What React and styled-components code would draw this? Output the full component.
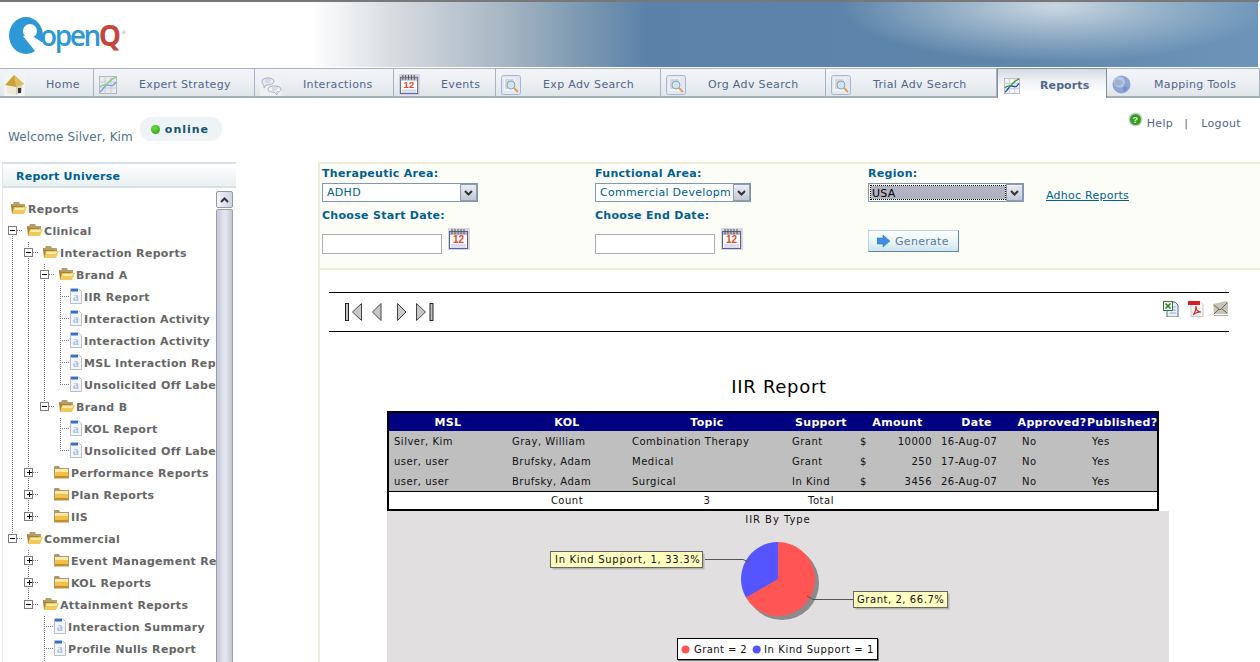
import React from "react";
import styled, { createGlobalStyle } from "styled-components";

const FONT = `"DejaVu Sans", Verdana, sans-serif`;

const Global = createGlobalStyle`
  html, body { margin: 0; padding: 0; background: #fff; height: 662px; overflow: hidden; }
  body { font-family: ${FONT}; font-size: 11px; }
  * { box-sizing: border-box; }
`;

const Page = styled.div`
  width: 1260px;
  height: 662px;
  overflow: hidden;
  display: flex;
  flex-direction: column;
`;

/* ---------- banner ---------- */
const Banner = styled.header`
  height: 68px;
  flex: none;
  display: flex;
  align-items: flex-start;
  border-top: 2px solid #77787a;
  border-bottom: 1px solid #fff;
  border-right: 2px solid #fff;
  background:
    radial-gradient(ellipse 215px 56px at 1055px 4px, rgba(208, 219, 228, 0.96) 0%, rgba(175, 195, 212, 0.72) 45%, rgba(110, 148, 184, 0) 100%),
    linear-gradient(90deg, #fff 310px, #d4d9df 400px, #a9b7c4 500px, #7796b0 590px, #5a81a8 650px, #5e86ab 1000px, #6c95b9 1258px);
`;

const LogoWrap = styled.div`
  display: flex;
  align-items: center;
  margin: 15px 0 0 9px;
  height: 37px;
`;

const LogoOpen = styled.span`
  font-family: "Open Sans", sans-serif;
  font-size: 28px;
  font-weight: 600;
  letter-spacing: -2.4px;
  color: #2d98d6;
  margin: 0 0 0 -3px;
  line-height: 37px;
`;

const LogoQ = styled.span`
  font-family: "Open Sans", sans-serif;
  font-size: 28px;
  font-weight: 700;
  letter-spacing: -1px;
  color: #c4473f;
  line-height: 37px;
`;

const LogoReg = styled.span`
  font-size: 5px;
  color: #9ab;
  margin: -8px 0 0 1px;
`;

/* ---------- tabs ---------- */
const TabBar = styled.nav`
  height: 30px;
  flex: none;
  display: flex;
`;

const Tab = styled.a`
  flex: ${(p) => (p.$w ? `0 0 ${p.$w}px` : "1 1 auto")};
  display: flex;
  align-items: center;
  padding: 4px 0 0 ${(p) => p.$pad}px;
  border-top: 1px solid ${(p) => (p.$active ? "#7f90a4" : "#a8b4c6")};
  border-bottom: ${(p) => (p.$active ? "0" : "2px solid #a4aebb")};
  border-right: 1px solid ${(p) => (p.$active ? "#7f90a4" : "#a8b4c6")};
  border-left: ${(p) => (p.$active ? "1px solid #7f90a4" : "0")};
  background: ${(p) =>
    p.$active
      ? "linear-gradient(180deg,#d3dae2 0%,#eef1f5 40%,#fff 85%)"
      : "linear-gradient(180deg,#f3f4f8 0%,#eceff3 50%,#dfe6e9 100%)"};
  color: #50668c;
  font-size: 11px;
  font-weight: ${(p) => (p.$active ? 700 : 400)};
  letter-spacing: ${(p) => (p.$active ? "0.1px" : "0.35px")};
  white-space: nowrap;
`;

const TabLabel = styled.span`
  margin-left: ${(p) => p.$gap}px;
`;

/* ---------- welcome ---------- */
const WelcomeRow = styled.div`
  height: 64px;
  flex: none;
  display: flex;
  padding: 19px 19px 0 8px;
`;

const Welcome = styled.span`
  font-size: 12px;
  letter-spacing: 0.1px;
  color: #4f7190;
  margin-top: 13px;
`;

const Online = styled.span`
  display: flex;
  align-items: center;
  gap: 5px;
  width: 82px;
  height: 24px;
  margin-left: 7px;
  padding: 0 0 0 11px;
  border-radius: 11px;
  background: #eef4f5;
  color: #17536f;
  font-size: 11px;
  font-weight: 700;
  letter-spacing: 1px;
`;

const Dot = styled.i`
  width: 9px;
  height: 9px;
  border-radius: 50%;
  background: radial-gradient(circle at 40% 35%, #6fdc3c, #1e9a12);
`;

const UserLinks = styled.div`
  margin-left: auto;
  display: flex;
  align-items: flex-start;
  color: #50668c;
  letter-spacing: 0.35px;
  margin-top: -5px;
`;

const LinkText = styled.span`
  margin: 5px 0 0 ${(p) => p.$ml || 0}px;
`;

/* ---------- columns ---------- */
const Body = styled.div`
  flex: 1;
  min-height: 0;
  display: flex;
  padding-left: 2px;
`;

const Sidebar = styled.aside`
  width: 234px;
  flex: none;
  display: flex;
  flex-direction: column;
  border-top: 2px solid #d9e0e4;
  border-left: 1px solid #dfe5e9;
  margin-right: 82px;
`;

const SideHead = styled.div`
  height: 24px;
  flex: none;
  padding: 6px 0 0 13px;
  background: linear-gradient(180deg, #fff, #e9f0f1);
  border-bottom: 2px solid #d9e0e4;
  font-weight: 700;
  color: #00608f;
  font-size: 11px;
  letter-spacing: 0.25px;
`;

const SideBody = styled.div`
  flex: 1;
  min-height: 0;
  display: flex;
  padding: 3px 4px 0 0;
`;

const Tree = styled.div`
  flex: 0 0 213px;
  width: 213px;
  overflow: hidden;
  padding: 7px 0 0 0;
`;

const dots = (x, y, w, h) => {
  const dir = w === 1 ? "to bottom" : "to right";
  return `repeating-linear-gradient(${dir},#777 0 1px,transparent 1px 2px) ${x}px ${y}px / ${w}px ${h}px no-repeat`;
};

const TreeRow = styled.div`
  height: 22px;
  display: flex;
  align-items: center;
  padding-left: ${(p) => p.$pad}px;
  background: ${(p) => p.$lines || "none"};
  white-space: nowrap;
  color: #666;
  font-weight: 700;
  font-size: 11px;
  letter-spacing: 0.32px;
`;

const Expander = styled.span`
  flex: none;
  width: 9px;
  height: 9px;
  margin-top: -2px;
  border: 1px solid #7b7b7b;
  background: #fff;
  display: flex;
  align-items: center;
  justify-content: center;
`;

const Bar = styled.i`
  display: block;
  width: 5px;
  height: 1px;
  background: #000;
`;

const BarV = styled.i`
  display: block;
  width: 1px;
  height: 5px;
  margin-left: -3px;
  background: #000;
`;

const NodeIcon = styled.span`
  flex: none;
  display: flex;
  margin-left: ${(p) => p.$ml}px;
  margin-top: -3px;
  margin-right: 1px;
`;

const Scroll = styled.div`
  width: 17px;
  flex: none;
  display: flex;
  flex-direction: column;
  gap: 1px;
`;

const ScrollBtn = styled.div`
  height: 17px;
  flex: none;
  border: 1px solid #8e9aa8;
  border-radius: 2px;
  background: linear-gradient(90deg, #f4f5fa, #cdd2e0);
  display: flex;
  align-items: center;
  justify-content: center;
`;

const ScrollThumb = styled.div`
  flex: 1;
  border: 1px solid #98a2ae;
  border-bottom: 0;
  border-radius: 2px 2px 0 0;
  background: linear-gradient(90deg, #c5c8d8 0%, #dcdee9 35%, #e6e8f0 55%, #c4c7d6 100%);
`;

/* ---------- main ---------- */
const Main = styled.main`
  flex: 1;
  min-width: 0;
  display: flex;
  flex-direction: column;
`;

const Filters = styled.section`
  height: 108px;
  flex: none;
  display: grid;
  grid-template-columns: 273px 273px 178px 1fr;
  grid-template-rows: 42px 1fr;
  padding: 2px 0 0 2px;
  border-top: 2px solid #efecd8;
  border-bottom: 2px solid #efecd8;
  border-left: 2px solid #efecd8;
  background: #fdfdf8;
`;

const Field = styled.div`
  display: flex;
  flex-direction: column;
  align-items: flex-start;
`;

const FieldLabel = styled.label`
  height: 14px;
  line-height: 16px;
  font-weight: 700;
  color: #00608f;
  font-size: 11px;
  letter-spacing: 0.3px;
`;

const SelectBox = styled.div`
  margin-top: 3px;
  width: 156px;
  height: 19px;
  display: flex;
  border: 1px solid #7f98b2;
  background: #fff;
`;

const SelectValue = styled.span`
  flex: 1;
  min-width: 0;
  overflow: hidden;
  white-space: nowrap;
  line-height: ${(p) => (p.$focus ? "15px" : "18px")};
  padding-left: ${(p) => (p.$focus ? "1px" : "4px")};
  margin: ${(p) => (p.$focus ? "2px 1px 2px 2px" : "0")};
  font-size: 11px;
  letter-spacing: 0.3px;
  color: ${(p) => (p.$focus ? "#000" : "#00608f")};
  background: ${(p) => (p.$focus ? "#b2b3c0" : "transparent")};
  outline: ${(p) => (p.$focus ? "1px dotted #000" : "none")};
`;

const SelectArrow = styled.span`
  flex: 0 0 17px;
  display: flex;
  align-items: center;
  justify-content: center;
  border: 1px solid #8e9bb2;
  background: linear-gradient(180deg, #eceef5, #c4c7d4);
`;

const DateRow = styled.div`
  display: flex;
  align-items: flex-start;
  margin-top: 6px;
`;

const DateInput = styled.div`
  width: 120px;
  height: 20px;
  margin: 6px 6px 0 0;
  background: #fff;
  border: 1px solid #a9adb6;
`;

const GenerateButton = styled.button`
  margin-top: 22px;
  width: 91px;
  height: 22px;
  padding: 0 0 0 8px;
  display: flex;
  align-items: center;
  gap: 5px;
  border: 1px solid #bcd3e2;
  border-right-color: #5f85a8;
  border-bottom-color: #5f85a8;
  background: linear-gradient(180deg, #fdfefe 0%, #eef6f8 45%, #cde5ed 100%);
  color: #5a7a9e;
  font-family: ${FONT};
  font-size: 11px;
  letter-spacing: 0.3px;
`;

const AdhocLink = styled.a`
  margin-top: 22px;
  height: 14px;
  line-height: 16px;
  color: #00608f;
  text-decoration: underline;
  font-size: 11px;
  letter-spacing: 0.25px;
`;

const Report = styled.section`
  flex: 1;
  min-height: 0;
  overflow: hidden;
  border-left: 2px solid #efecd8;
  padding-top: 22px;
`;

const Toolbar = styled.div`
  height: 40px;
  margin: 0 31px 0 9px;
  display: flex;
  align-items: center;
  padding: 0 0 0 16px;
  border-top: 1px solid #000;
  border-bottom: 1px solid #000;
`;

const PageBtns = styled.div`
  display: flex;
  align-items: center;
`;

const PageGap = styled.span`
  width: ${(p) => p.$w}px;
`;

const ExportBtns = styled.div`
  margin: -6px 1px 0 auto;
  display: flex;
  gap: 9px;
`;

const ReportBody = styled.div`
  width: 782px;
  margin-left: 67px;
`;

const ReportTitle = styled.h1`
  margin: 44px 0 13px;
  height: 22px;
  line-height: 22px;
  padding-left: 2px;
  text-align: center;
  font-size: 18px;
  font-weight: 400;
  color: #000;
  letter-spacing: 0.7px;
`;

const Table = styled.table`
  width: 772px;
  table-layout: fixed;
  border-collapse: separate;
  border-spacing: 0;
  border: 2px solid #000;
  font-size: 10px;
  letter-spacing: 0.5px;
  color: #111;
`;

const Th = styled.th`
  height: 18px;
  padding: 0 0 0 ${(p) => p.$pl || 0}px;
  background: #000080;
  color: #fff;
  font-size: 11px;
  font-weight: 700;
  letter-spacing: 0.3px;
  text-align: center;
  white-space: nowrap;
`;

const Td = styled.td`
  height: 20px;
  padding: 0 4px 0 5px;
  background: #bfbfbf;
  white-space: nowrap;
`;

const TotalTd = styled.td`
  height: 18px;
  padding: 0;
  border-top: 1px solid #000;
  background: #fff;
  text-align: center;
`;

const Money = styled.div`
  display: flex;
  justify-content: space-between;
`;

const Chart = styled.div`
  width: 782px;
  height: 160px;
  background: #e2dfe0;
`;

const ChartText = styled.text`
  font-family: ${FONT};
  font-size: 10px;
  letter-spacing: ${(p) => p.$ls}px;
  fill: #111;
`;

/* ---------- icons ---------- */
const Svg = ({ w, h, vb, children, style }) => (
  <svg width={w} height={h} viewBox={vb || `0 0 ${w} ${h}`} style={{ display: "block", flex: "none", ...style }}>
    {children}
  </svg>
);

const HomeIcon = () => (
  <Svg w={21} h={22}>
    <rect width="21" height="22" fill="#f4f4f2" />
    <path d="M3 12v7l8 2 7-3v-7l-7 2z" fill="#efe9d8" />
    <path d="M12 13l6-2v7l-6 3z" fill="#d8d2c0" />
    <path d="M1 11L10 1l10 9-8 3z" fill="#c9a23c" />
    <path d="M10 1l10 9-8 3z" fill="#e0bd5b" />
    <rect x="14" y="14" width="3" height="5" fill="#333" />
  </Svg>
);

const ChartIcon = ({ w = 18, faded }) => (
  <Svg w={w} h={w} vb="0 0 18 18">
    <rect x="0.5" y="0.5" width="17" height="17" fill={faded ? "#e9ecef" : "#f4f4fa"} stroke="#b5b5c5" />
    <path d="M0 6h18M0 12h18M6 0v18M12 0v18" stroke="#c8c8d8" strokeWidth="1" />
    <path d="M1 16C5 14 5 8 9 9s4 2 8-3" stroke={faded ? "#7fa3e0" : "#1b49c8"} strokeWidth="1.5" fill="none" />
    <path d="M1 11c3-3 5-1 7-3s4-5 9-7" stroke={faded ? "#8ed07e" : "#2ca51f"} strokeWidth="1.5" fill="none" />
  </Svg>
);

const SpeechIcon = () => (
  <Svg w={22} h={22}>
    <rect width="22" height="22" fill="#eef0f3" />
    <path d="M2 7c0-4 12-4 12 0 0 4-7 4-8 4l-2 3 0-3C3 11 2 9 2 7z" fill="#e8ecf4" stroke="#a8aec0" />
    <path d="M8 15c0-4 13-4 13 0 0 3-3 3-4 3l0 3-3-3c-3 0-6 0-6-3z" fill="#f2f4f8" stroke="#a8aec0" />
    <path d="M5 6h6M5 8h5M12 14h6M12 16h5" stroke="#c0c6d2" />
  </Svg>
);

const CalendarIcon = ({ size = 22 }) => (
  <Svg w={size} h={size} vb="0 0 22 22">
    <rect width="22" height="22" fill="#d6d6da" />
    <rect x="1.5" y="3.5" width="18" height="17" fill="#fff" stroke="#5a5f9a" />
    <rect x="2" y="4" width="17" height="3" fill="#b8b8c8" />
    <path d="M4 1v5M7 1v5M10 1v5M13 1v5M16 1v5" stroke="#555" strokeWidth="1" />
    <text x="10.5" y="15" textAnchor="middle" fontFamily="Liberation Sans" fontWeight="700" fontSize="10" fill="#e8461c">12</text>
    <path d="M3 17h15M3 19h15" stroke="#b6bce0" />
  </Svg>
);

const SearchDocIcon = () => (
  <Svg w={20} h={20}>
    <rect x="0.5" y="0.5" width="19" height="19" rx="2" fill="#e3e8f2" stroke="#a5b6d4" />
    <rect x="3" y="3" width="11" height="13" fill="#f4f5f7" />
    <path d="M4 5h9M4 7h9M4 9h3M4 11h3M4 13h3" stroke="#b3b7bd" />
    <circle cx="10" cy="10" r="4" fill="#cfe6f2" stroke="#8aa5b5" />
    <path d="M13 13l4 4" stroke="#e89a4c" strokeWidth="2" />
  </Svg>
);

const GlobeIcon = () => (
  <Svg w={19} h={19}>
    <circle cx="9.5" cy="9.5" r="9" fill="#8ea4d6" />
    <circle cx="7.5" cy="7" r="5.5" fill="#b4c6e6" />
    <path d="M3 5c3-2 5 0 7 1s1 3-1 4-5 1-6-1z" fill="#a1b0c8" />
    <path d="M11 12c2-1 4 0 5 1-1 2-3 4-5 4z" fill="#7a8fc4" />
  </Svg>
);

const HelpIcon = () => (
  <Svg w={15} h={15}>
    <circle cx="7.5" cy="7.5" r="7" fill="#c9cdd0" />
    <circle cx="7.5" cy="7.5" r="5.5" fill="#2ea31a" />
    <text x="7.5" y="11" textAnchor="middle" fontFamily="Liberation Sans" fontWeight="700" fontSize="9" fill="#fff">?</text>
  </Svg>
);

const FolderOpen = () => (
  <Svg w={16} h={14}>
    <path d="M0 3h2l1-2h5l1 2h5v3H0z" fill="#b0a070" />
    <path d="M0 3l1 10h11l0-8H2z" fill="#a88030" />
    <path d="M3 6h13l-3 7H1z" fill="#f5c85a" />
    <path d="M4 7h10l-1 2H3z" fill="#fdeeb0" />
  </Svg>
);

const FolderClosed = () => (
  <Svg w={16} h={14}>
    <path d="M0 3V1.5L1 1h4l1 2h9v10.500H0z" fill="#a79a72" />
    <path d="M1 4h13v9H1z" fill="#f3c04b" />
    <path d="M1 4h13v3H1z" fill="#fde9a2" />
    <path d="M1 11h13v2H1z" fill="#c98e1f" />
  </Svg>
);

const DocIcon = () => (
  <Svg w={13} h={16}>
    <path d="M0.5 0.5h8l3 3v12h-11z" fill="#f4f5f8" stroke="#b9bdc4" />
    <rect x="1" y="1" width="7" height="2.5" fill="#2f6fd8" />
    <text x="6" y="13" textAnchor="middle" fontFamily="Liberation Serif" fontWeight="700" fontSize="12" fill="#a9c2e6">a</text>
  </Svg>
);

const Chevron = ({ up }) => (
  <Svg w={9} h={6}>
    <path d={up ? "M1 5l3.5-3.5L8 5" : "M1 1l3.5 3.5L8 1"} stroke="#333" strokeWidth="2" fill="none" />
  </Svg>
);

const ArrowIcon = () => (
  <Svg w={13} h={12}>
    <path d="M0 3h6V0l7 6-7 6V9H0z" fill="#3f8fe0" stroke="#2a6bb8" strokeWidth="0.5" />
  </Svg>
);

const PageFirst = () => (
  <Svg w={18} h={18}>
    <rect x="0.5" y="0.5" width="3" height="17" fill="#c0c0c0" stroke="#222" />
    <path d="M16.5 0.5v17L7.5 9z" fill="#c8c8c8" stroke="#444" />
  </Svg>
);
const PagePrev = () => (
  <Svg w={10} h={18}>
    <path d="M9 0.5v17L0.5 9z" fill="#c8c8c8" stroke="#444" />
  </Svg>
);
const PageNext = () => (
  <Svg w={10} h={18}>
    <path d="M0.5 0.5v17L9 9z" fill="#c8c8c8" stroke="#444" />
  </Svg>
);
const PageLast = () => (
  <Svg w={18} h={18}>
    <rect x="14" y="0.5" width="3" height="17" fill="#c0c0c0" stroke="#222" />
    <path d="M0.5 0.5v17L9.500 9z" fill="#c8c8c8" stroke="#444" />
  </Svg>
);

const ExcelIcon = () => (
  <Svg w={16} h={16}>
    <path d="M4 1h8l3 3v12H4z" fill="#e6ecf6" stroke="#4a6a9a" />
    <path d="M7 6h6M7 9h6M7 12h6" stroke="#9db4d4" />
    <rect x="0.5" y="0.5" width="9" height="9" fill="#fff" stroke="#2c7a2c" />
    <path d="M2.5 2.5l5 5M7.5 2.5l-5 5" stroke="#1d8a1d" strokeWidth="1.6" />
  </Svg>
);

const PdfIcon = () => (
  <Svg w={16} h={16}>
    <path d="M3 0.5h9l3 3v12H3z" fill="#f8f8f8" stroke="#c8c8c8" />
    <rect x="0" y="0" width="12" height="4" fill="#d81e1e" />
    <path d="M5 14c2-2 3-6 3-9 0 4 2 6 5 6-3 0-6 1-8 3z" fill="none" stroke="#e01a1a" strokeWidth="1.1" />
  </Svg>
);

const MailIcon = () => (
  <Svg w={15} h={15}>
    <path d="M0 3l13-3 2 1v12H1z" fill="#c8c4b8" />
    <path d="M1 4l6 5 7-7M1 13l5-5M14 12l-5-4" stroke="#6b675c" fill="none" />
    <path d="M1 14h14v1H1z" fill="#aaa" />
  </Svg>
);

const LogoMark = () => (
  <Svg w={34} h={37}>
    <ellipse cx="17" cy="18.500" rx="17" ry="18.500" fill="#2d98d6" />
    <circle cx="21" cy="14" r="7" fill="#fff" />
    <path d="M14 19l12 15h8V26l-12-8z" fill="#fff" />
  </Svg>
);

/* ---------- data ---------- */
const TABS = [
  { label: "Home", w: 94, pad: 4, gap: 21, icon: <HomeIcon /> },
  { label: "Expert Strategy", w: 161, pad: 5, gap: 22, icon: <ChartIcon faded /> },
  { label: "Interactions", w: 139, pad: 5, gap: 21, icon: <SpeechIcon /> },
  { label: "Events", w: 102, pad: 5, gap: 21, icon: <CalendarIcon size={21} /> },
  { label: "Exp Adv Search", w: 165, pad: 5, gap: 22, icon: <SearchDocIcon /> },
  { label: "Org Adv Search", w: 165, pad: 5, gap: 22, icon: <SearchDocIcon /> },
  { label: "Trial Adv Search", w: 171, pad: 5, gap: 22, icon: <SearchDocIcon /> },
  { label: "Reports", w: 110, pad: 6, gap: 20, active: true, icon: <ChartIcon w={16} /> },
  { label: "Mapping Tools", pad: 5, gap: 23, icon: <GlobeIcon /> },
];

const OFF = 3; // tree x offset: the sidebar's content box begins at page x 3
const V = (x, y = 0, h = 22) => dots(x - OFF, y, 1, h);
const H = (x, w) => dots(x - OFF, 10, w, 1);

const A = 12, B = 28, C = 44, D = 60;
const full = (...xs) => xs.map((x) => V(x));

const TREE = [
  { label: "Reports", icon: "open", iconX: 11, lines: [] },
  { label: "Clinical", icon: "open", exp: "minus", expX: 8, iconX: 27, lines: [V(A, 8, 14), H(17, 5)] },
  { label: "Interaction Reports", icon: "open", exp: "minus", expX: 24, iconX: 43, lines: [...full(A, B), H(33, 5)] },
  { label: "Brand A", icon: "open", exp: "minus", expX: 40, iconX: 59, lines: [...full(A, B, C), H(49, 5)] },
  { label: "IIR Report", icon: "doc", iconX: 70, lines: [...full(A, B, C, D), H(D, 9)] },
  { label: "Interaction Activity", icon: "doc", iconX: 70, lines: [...full(A, B, C, D), H(D, 9)] },
  { label: "Interaction Activity", icon: "doc", iconX: 70, lines: [...full(A, B, C, D), H(D, 9)] },
  { label: "MSL Interaction Rep", icon: "doc", iconX: 70, lines: [...full(A, B, C, D), H(D, 9)] },
  { label: "Unsolicited Off Labe", icon: "doc", iconX: 70, lines: [...full(A, B, C), V(D, 0, 11), H(D, 9)] },
  { label: "Brand B", icon: "open", exp: "minus", expX: 40, iconX: 59, lines: [...full(A, B), V(C, 0, 10), H(49, 5)] },
  { label: "KOL Report", icon: "doc", iconX: 70, lines: [...full(A, B, D), H(D, 9)] },
  { label: "Unsolicited Off Labe", icon: "doc", iconX: 70, lines: [...full(A, B), V(D, 0, 11), H(D, 9)] },
  { label: "Performance Reports", icon: "closed", exp: "plus", expX: 24, iconX: 54, lines: [...full(A, B), H(33, 5)] },
  { label: "Plan Reports", icon: "closed", exp: "plus", expX: 24, iconX: 54, lines: [...full(A, B), H(33, 5)] },
  { label: "IIS", icon: "closed", exp: "plus", expX: 24, iconX: 54, lines: [V(A), V(B, 0, 10), H(33, 5)] },
  { label: "Commercial", icon: "open", exp: "minus", expX: 8, iconX: 27, lines: [V(A, 0, 10), H(17, 5)] },
  { label: "Event Management Re", icon: "closed", exp: "plus", expX: 24, iconX: 54, lines: [V(B), H(33, 5)] },
  { label: "KOL Reports", icon: "closed", exp: "plus", expX: 24, iconX: 54, lines: [V(B), H(33, 5)] },
  { label: "Attainment Reports", icon: "open", exp: "minus", expX: 24, iconX: 43, lines: [V(B, 0, 10), H(33, 5)] },
  { label: "Interaction Summary", icon: "doc", iconX: 54, lines: [V(C), H(C, 9)] },
  { label: "Profile Nulls Report", icon: "doc", iconX: 54, lines: [V(C), H(C, 9)] },
  { label: "", lines: [V(C)], iconX: 54 },
];

const NODE_ICONS = { open: <FolderOpen />, closed: <FolderClosed />, doc: <DocIcon /> };

const TreeNode = ({ node }) => {
  const hasExp = Boolean(node.exp);
  const start = (hasExp ? node.expX : node.iconX) - OFF;
  const ml = hasExp ? node.iconX - node.expX - 9 : 0;
  return (
    <TreeRow $pad={start} $lines={node.lines.length ? node.lines.join(",") : undefined}>
      {hasExp && (
        <Expander>
          <Bar />
          {node.exp === "plus" && <BarV />}
        </Expander>
      )}
      {node.icon && <NodeIcon $ml={ml}>{NODE_ICONS[node.icon]}</NodeIcon>}
      {node.label}
    </TreeRow>
  );
};

const ROWS = [
  ["Silver, Kim", "Gray, William", "Combination Therapy", "Grant", "10000", "16-Aug-07", "No", "Yes"],
  ["user, user", "Brufsky, Adam", "Medical", "Grant", "250", "17-Aug-07", "No", "Yes"],
  ["user, user", "Brufsky, Adam", "Surgical", "In Kind", "3456", "26-Aug-07", "No", "Yes"],
];

const COLS = [118, 120, 160, 68, 81, 81, 70, 70];
const HEADS = ["MSL", "KOL", "Topic", "Support", "Amount", "Date", "Approved?", "Published?"];

const Select = ({ value, focus }) => (
  <SelectBox>
    <SelectValue $focus={focus}>{value}</SelectValue>
    <SelectArrow>
      <Chevron />
    </SelectArrow>
  </SelectBox>
);

const PieChart = () => (
  <svg width="782" height="160" viewBox="0 0 782 160" style={{ display: "block" }}>
    <ChartText x="391" y="12" textAnchor="middle" $ls={0.95}>IIR By Type</ChartText>
    <circle cx="395" cy="72" r="37" fill="#8b8b8b" />
    <path d="M391 68V31A37 37 0 1 1 358.96 86.5Z" fill="#ff5555" />
    <path d="M391 68L358.96 86.5A37 37 0 0 1 391 31Z" fill="#5555ff" />
    <path d="M318 48.500H356L362 51" stroke="#555" fill="none" />
    <path d="M466 88.500H426L420 85" stroke="#555" fill="none" />
    <rect x="165.500" y="42.500" width="152" height="16" fill="#b5b3b4" />
    <rect x="163.500" y="40.500" width="152" height="16" fill="#ffffc0" stroke="#666" />
    <ChartText x="168" y="52" $ls={0.7}>In Kind Support, 1, 33.3%</ChartText>
    <rect x="468.500" y="82.500" width="94" height="16" fill="#b5b3b4" />
    <rect x="466.500" y="80.500" width="94" height="16" fill="#ffffc0" stroke="#666" />
    <ChartText x="470" y="92" $ls={0.55}>Grant, 2, 66.7%</ChartText>
    <rect x="290.500" y="127.500" width="200" height="21" fill="#fff" stroke="#000" />
    <path d="M491.500 128v21.500H291" stroke="#777" fill="none" />
    <circle cx="298.500" cy="138.500" r="4" fill="#ff5555" />
    <ChartText x="307" y="142" $ls={0.42}>Grant = 2</ChartText>
    <circle cx="369.700" cy="138.500" r="4" fill="#5555ff" />
    <ChartText x="377" y="142" $ls={0.62}>In Kind Support = 1</ChartText>
  </svg>
);

export default function App() {
  return (
    <Page>
      <Global />
      <Banner>
        <LogoWrap>
          <LogoMark />
          <LogoOpen>open</LogoOpen>
          <LogoQ>Q</LogoQ>
          <LogoReg>®</LogoReg>
        </LogoWrap>
      </Banner>

      <TabBar>
        {TABS.map((t) => (
          <Tab key={t.label} $w={t.w} $pad={t.pad} $active={t.active}>
            {t.icon}
            <TabLabel $gap={t.gap}>{t.label}</TabLabel>
          </Tab>
        ))}
      </TabBar>

      <WelcomeRow>
        <Welcome>Welcome Silver, Kim</Welcome>
        <Online>
          <Dot />
          online
        </Online>
        <UserLinks>
          <HelpIcon />
          <LinkText $ml={4}>Help</LinkText>
          <LinkText $ml={11}>|</LinkText>
          <LinkText $ml={13}>Logout</LinkText>
        </UserLinks>
      </WelcomeRow>

      <Body>
        <Sidebar>
          <SideHead>Report Universe</SideHead>
          <SideBody>
            <Tree>
              {TREE.map((n, i) => (
                <TreeNode key={i} node={n} />
              ))}
            </Tree>
            <Scroll>
              <ScrollBtn>
                <Chevron up />
              </ScrollBtn>
              <ScrollThumb />
            </Scroll>
          </SideBody>
        </Sidebar>

        <Main>
          <Filters>
            <Field>
              <FieldLabel>Therapeutic Area:</FieldLabel>
              <Select value="ADHD" />
            </Field>
            <Field>
              <FieldLabel>Functional Area:</FieldLabel>
              <Select value="Commercial Developm" />
            </Field>
            <Field>
              <FieldLabel>Region:</FieldLabel>
              <Select value="USA" focus />
            </Field>
            <Field>
              <AdhocLink>Adhoc Reports</AdhocLink>
            </Field>
            <Field>
              <FieldLabel>Choose Start Date:</FieldLabel>
              <DateRow>
                <DateInput />
                <CalendarIcon />
              </DateRow>
            </Field>
            <Field>
              <FieldLabel>Choose End Date:</FieldLabel>
              <DateRow>
                <DateInput />
                <CalendarIcon />
              </DateRow>
            </Field>
            <Field>
              <GenerateButton>
                <ArrowIcon />
                Generate
              </GenerateButton>
            </Field>
          </Filters>

          <Report>
            <Toolbar>
              <PageBtns>
                <PageFirst />
                <PageGap $w={9} />
                <PagePrev />
                <PageGap $w={15} />
                <PageNext />
                <PageGap $w={9} />
                <PageLast />
              </PageBtns>
              <ExportBtns>
                <ExcelIcon />
                <PdfIcon />
                <MailIcon />
              </ExportBtns>
            </Toolbar>

            <ReportBody>
              <ReportTitle>IIR Report</ReportTitle>
              <Table>
                <colgroup>
                  {COLS.map((w, i) => (
                    <col key={i} style={{ width: w }} />
                  ))}
                </colgroup>
                <thead>
                  <tr>
                    {HEADS.map((h) => (
                      <Th key={h} $pl={h === "Amount" ? 4 : 0}>{h}</Th>
                    ))}
                  </tr>
                </thead>
                <tbody>
                  {ROWS.map((r, i) => (
                    <tr key={i}>
                      {r.map((c, j) => (
                        <Td key={j}>
                          {j === 4 ? (
                            <Money>
                              <span>$</span>
                              <span>{c}</span>
                            </Money>
                          ) : (
                            c
                          )}
                        </Td>
                      ))}
                    </tr>
                  ))}
                  <tr>
                    <TotalTd />
                    <TotalTd>Count</TotalTd>
                    <TotalTd>3</TotalTd>
                    <TotalTd>Total</TotalTd>
                    <TotalTd />
                    <TotalTd />
                    <TotalTd />
                    <TotalTd />
                  </tr>
                </tbody>
              </Table>
              <Chart>
                <PieChart />
              </Chart>
            </ReportBody>
          </Report>
        </Main>
      </Body>
    </Page>
  );
}
